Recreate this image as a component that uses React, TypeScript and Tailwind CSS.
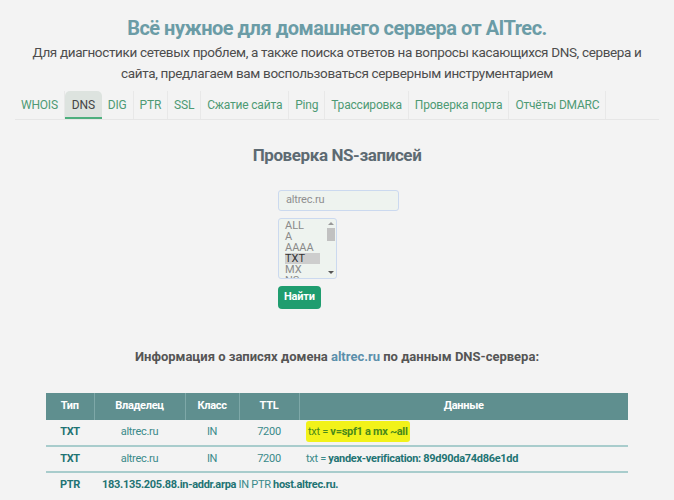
import React from "react";

const tabs = [
  "WHOIS",
  "DNS",
  "DIG",
  "PTR",
  "SSL",
  "Сжатие сайта",
  "Ping",
  "Трассировка",
  "Проверка порта",
  "Отчёты DMARC",
];

const types = ["ALL", "A", "AAAA", "TXT", "MX", "NS"];

export default function App() {
  return (
    <div
      className="min-h-[500px] w-[674px] overflow-hidden bg-[#f3f3f3] text-[#4a4a4a]"
      style={{ fontFamily: "Roboto, 'Liberation Sans', sans-serif" }}
    >
      <div className="pt-[14px] text-center">
        <h1 className="text-[20px] font-bold leading-[28px] tracking-[-0.5px] text-[#6b9ca6]">
          Всё нужное для домашнего сервера от AlTrec.
        </h1>
        <p className="mx-auto w-[624px] text-[13.5px] leading-[21px] tracking-[-0.35px] text-[#4d4d4d]">
          Для диагностики сетевых проблем, а также поиска ответов на вопросы касающихся DNS, сервера и
          сайта, предлагаем вам воспользоваться серверным инструментарием
        </p>
      </div>

      <div className="mx-[15px] mt-[7px] flex border-b border-[#e6e6e6]">
        {tabs.map((t, i) => (
          <div
            key={t}
            className={
              i === 1
                ? "flex h-[28px] items-center whitespace-nowrap rounded-t-[5px] border-b-2 border-[#4caf7d] bg-[#dde3df] px-[7px] pt-[2px] text-[12px] tracking-[-0.2px] text-[#444]"
                : "flex h-[28px] items-center whitespace-nowrap border-r border-[#e8e8e8] px-[6px] text-[12px] tracking-[-0.2px] text-[#4e9a74]"
            }
          >
            {t}
          </div>
        ))}
      </div>

      <h2 className="mt-[23px] text-center text-[17px] font-bold leading-[24px] tracking-[-0.4px] text-[#5d6a72]">
        Проверка NS-записей
      </h2>

      <div className="mt-[23px] flex flex-col items-start pl-[278px]">
        <div className="flex h-[21px] w-[121px] items-center rounded-[3px] border border-[#cbd9ef] bg-[#eef3ef] px-[7px] text-[11px] tracking-[-0.2px] text-[#8f8f8f]">
          altrec.ru
        </div>
        <div className="mt-[7px] flex h-[61px] w-[59px] overflow-hidden rounded-[3px] border border-[#cbd9ef] bg-[#eef3ef]">
          <div className="flex-1 pl-[6px] pr-[6px] pt-[1px] text-[11px] leading-[11px] text-[#8a8a8a]">
            {types.map((t) =>
              t === "TXT" ? (
                <div key={t} className="bg-[#cdcdcd] text-[#333]">
                  {t}
                </div>
              ) : (
                <div key={t}>{t}</div>
              )
            )}
          </div>
          <div className="flex w-[10px] flex-col items-center">
            <div className="mt-[3px] h-0 w-0 border-x-[3px] border-b-[3px] border-x-transparent border-b-[#999]" />
            <div className="mt-[3px] h-[13px] w-[8px] bg-[#c1c1c1]" />
            <div className="flex-1" />
            <div className="mb-[4px] h-0 w-0 border-x-[3px] border-t-[3px] border-x-transparent border-t-[#555]" />
          </div>
        </div>
        <button className="mt-[7px] h-[23px] rounded-[4px] bg-[#1f9d6f] px-[6px] text-[11px] font-bold tracking-[-0.2px] text-white">
          Найти
        </button>
      </div>

      <h3 className="mt-[38px] text-center text-[13px] font-bold leading-[20px] text-[#555]">
        Информация о записях домена <span className="text-[#5b8fab]">altrec.ru</span> по данным DNS-сервера:
      </h3>

      <table className="mx-auto mt-[26px] w-[582px] border-collapse text-[11px] tracking-[-0.3px]">
        <thead>
          <tr className="h-[27px] bg-[#5f8f8f] text-white">
            <th className="w-[48px] border-r border-[#7ea8a8] font-bold">Тип</th>
            <th className="w-[91px] border-r border-[#7ea8a8] font-bold">Владелец</th>
            <th className="w-[54px] border-r border-[#7ea8a8] font-bold">Класс</th>
            <th className="w-[60px] border-r border-[#7ea8a8] font-bold">TTL</th>
            <th className="font-bold">Данные</th>
          </tr>
        </thead>
        <tbody className="text-[#3a8a8a]">
          <tr className="h-[26px] border-b-2 border-[#a8cccc]">
            <td className="text-center font-bold text-[#1f7373]">TXT</td>
            <td className="text-center">altrec.ru</td>
            <td className="text-center">IN</td>
            <td className="text-center">7200</td>
            <td className="pl-[7px]">
              <span className="rounded-[3px] bg-[#f2f21a] px-[2px] py-[4px] text-[#4a8a1a]">
                txt = <b>v=spf1 a mx ~all</b>
              </span>
            </td>
          </tr>
          <tr className="h-[26px] border-b-2 border-[#a8cccc]">
            <td className="text-center font-bold text-[#1f7373]">TXT</td>
            <td className="text-center">altrec.ru</td>
            <td className="text-center">IN</td>
            <td className="text-center">7200</td>
            <td className="pl-[7px]">
              txt = <b className="text-[#1f7373]">yandex-verification: 89d90da74d86e1dd</b>
            </td>
          </tr>
          <tr className="h-[26px]">
            <td className="text-center font-bold text-[#1f7373]">PTR</td>
            <td colSpan={4} className="pl-[8px]">
              <b className="text-[#1f7373]">183.135.205.88.in-addr.arpa</b> IN PTR{" "}
              <b className="text-[#1f7373]">host.altrec.ru.</b>
            </td>
          </tr>
        </tbody>
      </table>
    </div>
  );
}
